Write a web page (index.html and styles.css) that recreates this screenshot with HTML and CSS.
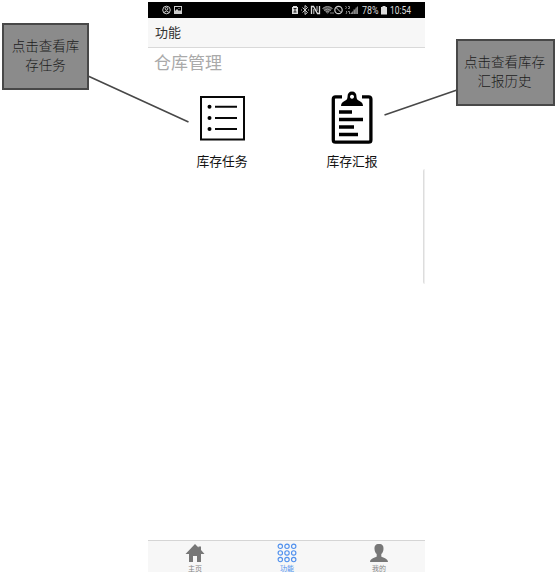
FILE: index.html
```html
<!DOCTYPE html>
<html lang="zh-CN">
<head>
<meta charset="utf-8">
<title>功能</title>
<link rel="stylesheet" href="styles.css">
</head>
<body>
<main class="phone">
  <div class="status">
    <svg class="status-left" width="22" height="16" viewBox="0 0 22 16" fill="none" stroke="#ccc">
      <circle cx="4.500" cy="8" r="3.800"/><circle cx="4.500" cy="6.800" r="1.300"/><path d="M2 10.500q2.500-3 5 0"/>
      <rect x="12.500" y="4.500" width="7" height="7"/><path d="M13 11V9l2-2 2 2 1-1 2 2v1z" fill="#ccc" stroke="none"/><path d="M16.500 6.500h1"/>
    </svg>
    <svg class="status-icons" width="68" height="16" viewBox="0 0 68 16" fill="none" stroke="#ccc">
      <path d="M1 5h1V4h4v1h1v7H1z" fill="#ddd" stroke="none"/><path d="M2.500 6.500h3M4 7v3M2.500 10h3" stroke="#222"/>
      <path d="M11.500 5.500l5 5L14 12.500v-9l2.500 2-5 5M10 8h1M17 8h1"/>
      <path d="M20.500 12V4.500l2 0 4 7h2V4" stroke="#ddd" stroke-width="1.300"/><path d="M22.800 12V7M26 9V4" stroke="#ccc"/>
      <path d="M31.500 6.500q5-4 10 0L36.500 12z" fill="#555" stroke="none"/><path d="M31.500 6.500q5-4 10 0M33 8.500q3.500-3 7 0M35 10q1.500-1.500 3 0" stroke="#999"/><path d="M40 10v2M42 10v2" stroke="#888"/>
      <circle cx="47.500" cy="8" r="3.700" stroke-width="1.200"/><path d="M45 5.500l5 5"/>
      <path d="M54.500 4l1 1.500-1 1.500M57 4.500h1.500v2H57M55 9l1 1-1 2M57 9.500h1.500V12" stroke="#888"/>
      <path d="M59 12l8-8v8z" fill="#888" stroke="none"/><path d="M62.500 7v5M65 5v7" stroke="#444" stroke-width=".6"/>
    </svg>
    <svg class="status-text" width="56" height="16" viewBox="0 0 56 16">
      <text x="0" y="12" textLength="16.500" lengthAdjust="spacingAndGlyphs">78%</text>
      <path d="M19 5h1.500V4h3v1H25v7.500h-6z" fill="#ddd"/>
      <text x="28" y="12" textLength="21" lengthAdjust="spacingAndGlyphs">10:54</text>
    </svg>
  </div>
  <header class="header">功能</header>
  <section class="content">
    <h1 class="title">仓库管理</h1>
    <div class="actions">
      <div class="action">
        <svg width="46" height="54" viewBox="0 0 46 54" fill="none" stroke="#080808" stroke-width="2">
          <rect x="2" y="6" width="43" height="42.500"/>
          <path d="M16 15.800h22M16 27h22M16 38h22"/>
          <g fill="#000" stroke="none"><circle cx="10.500" cy="15.800" r="2"/><circle cx="10.500" cy="27" r="2"/><circle cx="10.500" cy="38" r="2"/></g>
        </svg>
        <span class="label">库存任务</span>
      </div>
      <div class="action">
        <svg width="46" height="54" viewBox="0 0 46 54">
          <path d="M13 5.800H6.500Q4.300 5.800 4.300 8v41q0 2.200 2.200 2.200h33.200q2.200 0 2.200-2.200V8q0-2.200-2.200-2.200H33" fill="none" stroke="#000" stroke-width="3.300"/>
          <path fill-rule="evenodd" d="M12 15q0-3.500 3.500-5 3-1.200 3-4Q18.500.5 23 .5T27.500 6q0 2.800 3 4 3.500 1.500 3.500 5zM23 3.700a2 2 0 1 0 .01 0z"/>
          <path d="M10 21h13M10 28.500h24M10 36h15M10 43.500h19" stroke="#000" stroke-width="3.600"/>
        </svg>
        <span class="label">库存汇报</span>
      </div>
    </div>
  </section>
  <nav class="tabs">
    <div class="tab">
      <svg width="20" height="20" viewBox="0 0 20 20"><path d="M10 1l3.500 3.500V3.500h2.500v3.500l3.500 4H16v8h-4v-6H8v6H4v-8H.5z" fill="#777"/></svg>
      <span>主页</span>
    </div>
    <div class="tab active">
      <svg width="20" height="20" viewBox="0 0 20 20" fill="none" stroke="#5191ee" stroke-width="1.150">
        <circle cx="3.300" cy="3.300" r="2.200"/><circle cx="10" cy="3.300" r="2.200"/><circle cx="16.700" cy="3.300" r="2.200"/>
        <circle cx="3.300" cy="9.900" r="2.200"/><circle cx="10" cy="9.900" r="2.200"/><circle cx="16.700" cy="9.900" r="2.200"/>
        <circle cx="3.300" cy="16.500" r="2.200"/><circle cx="10" cy="16.500" r="2.200"/><circle cx="16.700" cy="16.500" r="2.200"/>
      </svg>
      <span>功能</span>
    </div>
    <div class="tab">
      <svg width="20" height="20" viewBox="0 0 20 20"><path d="M10 1c3.500 0 4.700 2 4.500 5-.2 2.500-1 4-2.200 5v2.500c1.200 1.300 6.700 1.700 6.700 5.500H1c0-3.800 5.500-4.200 6.700-5.500V11c-1.200-1-2-2.500-2.200-5C5.300 3 6.500 1 10 1z" fill="#777"/></svg>
      <span>我的</span>
    </div>
  </nav>
  <i class="edge"></i>
</main>
<svg class="lines" width="558" height="577" viewBox="0 0 558 577" fill="none" stroke="#484848" stroke-width="1.600"><path d="M88 76L188.500 122M457 90L384.500 115"/></svg>
<aside class="callout callout-left">点击查看库<br>存任务</aside>
<aside class="callout callout-right">点击查看库存<br>汇报历史</aside>
</body>
</html>
```
FILE: styles.css
```css
* { box-sizing: border-box; }
body {
  margin: 0;
  height: 577px;
  overflow: hidden;
  position: relative;
  background: #fff;
  font-family: "Noto Sans CJK SC", sans-serif;
}
svg { display: block; flex: none; }
.phone {
  position: relative;
  display: flex;
  flex-direction: column;
  width: 277px;
  height: 572px;
  margin-left: 148px;
  padding-top: 2px;
}
.status {
  display: flex;
  height: 16px;
  flex: none;
  padding-left: 14px;
  background: #000;
}
.status-icons { margin-left: 107px; }
.status-text { margin-left: 3px; font: 10px Roboto, sans-serif; fill: #ddd; }
.header {
  height: 30px;
  flex: none;
  padding-left: 7px;
  background: #f7f7f7;
  border-bottom: 1px solid #d9d9d9;
  color: #333;
  font-size: 13px;
  line-height: 28px;
}
.content { flex: 1; }
.title {
  margin: 0;
  padding-left: 6px;
  color: #aaa;
  font-size: 17px;
  font-weight: 400;
  line-height: 28px;
}
.actions { display: flex; gap: 70px; padding: 15px 0 0 44px; }
.action {
  display: flex;
  flex-direction: column;
  align-items: center;
  width: 60px;
}
.label {
  margin-top: 6px;
  color: #111;
  font-size: 12.800px;
  line-height: 20px;
}
.tabs {
  display: flex;
  flex: none;
  height: 32px;
  padding-left: 1px;
  background: #f7f7f7;
  border-top: 1px solid #d5d5d5;
}
.tab {
  display: flex;
  flex: 1;
  flex-direction: column;
  align-items: center;
  padding-top: 2px;
  color: #858585;
  font-size: 7px;
  line-height: 10px;
}
.active { color: #5191ee; }
.edge {
  position: absolute;
  top: 169px;
  right: 0;
  width: 2px;
  height: 115px;
  border-left: 1px solid #ddd;
  border-right: 1px solid #eee;
  border-radius: 2px 0 0 2px;
}
.lines { position: absolute; top: 0; left: 0; }
.callout {
  position: absolute;
  display: flex;
  align-items: center;
  justify-content: center;
  border: 2px solid #484848;
  background: #8b8b8b;
  color: #1c1c1c;
  font-family: "Liberation Serif", "Noto Sans CJK SC", serif;
  font-size: 13.500px;
  font-weight: 300;
  line-height: 19px;
  text-align: center;
}
.callout-left { top: 23px; left: 2px; width: 87px; height: 67px; padding-bottom: 1px; }
.callout-right { top: 39px; left: 456px; width: 99px; height: 67px; padding: 0 2px 1px 0; }
```
